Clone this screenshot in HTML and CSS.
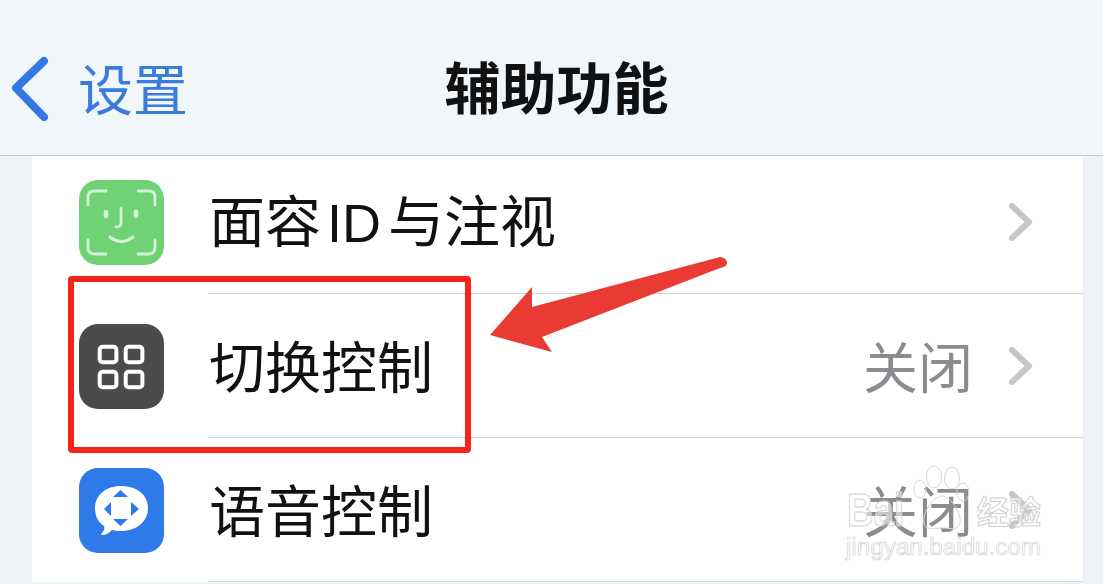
FILE: index.html
```html
<!DOCTYPE html>
<html lang="zh-CN">
<head>
<meta charset="utf-8">
<title>辅助功能</title>
<link rel="stylesheet" href="styles.css">
</head>
<body>
<div class="screen">
  <header class="nav">
    <div class="back">
      <svg class="back-chevron" viewBox="0 0 50 70"><path d="M39 7 L11 34 L39 63"/></svg>
      <span class="back-text">设置</span>
    </div>
    <h1 class="title">辅助功能</h1>
  </header>
  <main class="list">
    <div class="row row-first">
      <svg class="icon" viewBox="0 0 85 85">
        <rect width="85" height="85" rx="19" fill="#6fd274"/>
        <g fill="none" stroke="#d4f2d6" stroke-width="2.8" stroke-linecap="round" stroke-linejoin="round">
          <path d="M9 25V17Q9 11 15 11H27M59 11H70Q76 11 76 17V25M9 60V67Q9 74 15 74H27M59 74H70Q76 74 76 67V60"/>
          <path d="M42 28V43Q42 47 37 47"/>
          <path d="M31 57Q42 66 54 57" stroke-width="3"/>
          <path d="M27 32V36M57 32V36" stroke-width="4.5"/>
        </g>
      </svg>
      <div class="row-body">
        <span class="label">面容<span class="latin">ID</span>与注视</span>
        <svg class="chevron" viewBox="0 0 24 38"><path d="M3 3 L20 19 L3 35"/></svg>
      </div>
    </div>
    <div class="row">
      <svg class="icon" viewBox="0 0 85 85">
        <rect width="85" height="85" rx="19" fill="#4a4b4d"/>
        <g fill="none" stroke="#fff" stroke-width="4">
          <rect x="20.7" y="22.7" width="16.7" height="15.6" rx="3"/>
          <rect x="46.7" y="22.7" width="16.7" height="15.6" rx="3"/>
          <rect x="20.7" y="47.7" width="16.7" height="15.6" rx="3"/>
          <rect x="46.7" y="47.7" width="16.7" height="15.6" rx="3"/>
        </g>
      </svg>
      <div class="row-body">
        <span class="label">切换控制</span>
        <span class="detail">关闭</span>
        <svg class="chevron" viewBox="0 0 24 38"><path d="M3 3 L20 19 L3 35"/></svg>
      </div>
    </div>
    <div class="row">
      <svg class="icon" viewBox="0 0 85 85">
        <rect width="85" height="85" rx="19" fill="#2f7aeb"/>
        <path d="M42 18C58 18 69 27 69 40C69 54 57 63 42 63C38 63 35 62.5 33 62C30 65 27 67 23 67C22 67 22 66 23 65C25 63 26 60 25 58C19 54 16 48 16 40C16 27 27 18 42 18Z" fill="#fff"/>
        <path d="M41.5 22L49 29H34ZM41.5 58L34 51H49ZM25 41L32 34V48ZM60 41L52 34V48Z" fill="#2f7aeb"/>
      </svg>
      <div class="row-body">
        <span class="label">语音控制</span>
        <span class="detail">关闭</span>
        <svg class="chevron" viewBox="0 0 24 38"><path d="M3 3 L20 19 L3 35"/></svg>
      </div>
    </div>
  </main>
  <div class="highlight"></div>
  <svg class="arrow" viewBox="0 0 250 110">
    <path d="M7 82 L49 34 L49 54 L237 4 Q244 5 244 10 Q244 14 237 15 L59 84 L69 99 Z" fill="#e93a33"/>
  </svg>
  <div class="watermark">
    <svg class="paw" viewBox="0 0 64 80">
      <g fill="none" stroke="#d6d6d6" stroke-width="1">
        <ellipse cx="22" cy="12" rx="7.5" ry="11"/>
        <ellipse cx="40" cy="13" rx="7.5" ry="11"/>
        <ellipse cx="8" cy="24" rx="6" ry="9"/>
        <ellipse cx="51" cy="27" rx="6" ry="9"/>
        <path d="M30 31C38 31 50 48 48 58C46 66 37 63 30 63C22 63 13 66 12 58C10 48 21 31 30 31Z"/>
      </g>
    </svg>
    <span class="wm-bai">Bai</span>
    <span class="wm-cn">经验</span>
    <div class="wm-url">jingyan.baidu.com</div>
  </div>
</div>
</body>
</html>
```
FILE: styles.css
```css
* { box-sizing: border-box; }
html, body { margin: 0; padding: 0; }
body { width: 1103px; height: 584px; overflow: hidden; background: #eff3f7; font-family: "Noto Sans CJK SC", "Noto Sans", sans-serif; }
.screen { position: relative; width: 1103px; height: 584px; overflow: hidden; }

.nav { position: relative; display: flex; align-items: center; justify-content: center; height: 156px; background: #f1f6fb; border-bottom: 1px solid #c4c6c8; }
.title { margin: 0; font-size: 56px; line-height: 1; font-weight: 700; color: #111; position: relative; top: 7px; left: 5px; }
.back { position: absolute; left: 5px; top: 54px; display: flex; align-items: center; gap: 23px; color: #3a7bdc; font-size: 55px; line-height: 64px; font-weight: 400; }
.back-chevron { width: 50px; height: 70px; flex: none; }
.back-chevron path { fill: none; stroke: #3578e5; stroke-width: 8; stroke-linecap: round; stroke-linejoin: round; }
.back-text { margin-bottom: 6px; }

.list { margin: 0 20px 0 32px; background: #fff; padding-left: 47px; }
.row { display: flex; align-items: center; height: 144px; gap: 44px; }
.row-first { height: 138px; padding-bottom: 5px; }
.icon { width: 85px; height: 85px; flex: none; }
.row-body { flex: 1; align-self: stretch; display: flex; align-items: center; border-bottom: 1px solid #d4d5d7; padding-right: 50px; }
.row-first .row-body { margin-bottom: -5px; padding-bottom: 5px; }
.label { flex: 1; margin-left: 1px; margin-bottom: 3px; font-size: 56px; line-height: 64px; color: #111; font-weight: 400; }
.latin { font-size: 54px; margin: 0 7px 0 6px; font-family: "Liberation Sans", sans-serif; }
.detail { font-size: 55px; line-height: 64px; color: #8c8c90; margin-right: 36px; margin-bottom: 3px; }
.chevron { width: 24px; height: 38px; flex: none; }
.chevron path { fill: none; stroke: #c6c6c9; stroke-width: 6; stroke-linecap: round; stroke-linejoin: round; }

.highlight { position: absolute; left: 68px; top: 276px; width: 403px; height: 177px; border: 6px solid #f6231a; border-radius: 4px; }
.arrow { position: absolute; left: 483px; top: 253px; width: 250px; height: 110px; }

.watermark { position: absolute; left: 846px; top: 465px; width: 200px; height: 100px; }
.paw { position: absolute; left: 66px; top: 0; width: 64px; height: 80px; }
.wm-bai { position: absolute; left: 1px; top: 20px; font-family: "Liberation Sans", sans-serif; font-size: 46px; line-height: 50px; font-weight: 700; color: rgba(255,255,255,0.55); -webkit-text-stroke: 1px #cfcfcf; transform: scaleX(0.8); transform-origin: left center; }
.wm-cn { position: absolute; left: 131px; top: 22px; font-size: 32px; line-height: 46px; font-weight: 700; color: rgba(255,255,255,0.55); -webkit-text-stroke: 1px #cfcfcf; white-space: nowrap; }
.wm-url { position: absolute; left: 0; top: 68px; font-family: "Liberation Sans", sans-serif; font-size: 24.2px; line-height: 28px; color: rgba(255,255,255,0.6); -webkit-text-stroke: 0.7px #d2d2d2; white-space: nowrap; }
```
